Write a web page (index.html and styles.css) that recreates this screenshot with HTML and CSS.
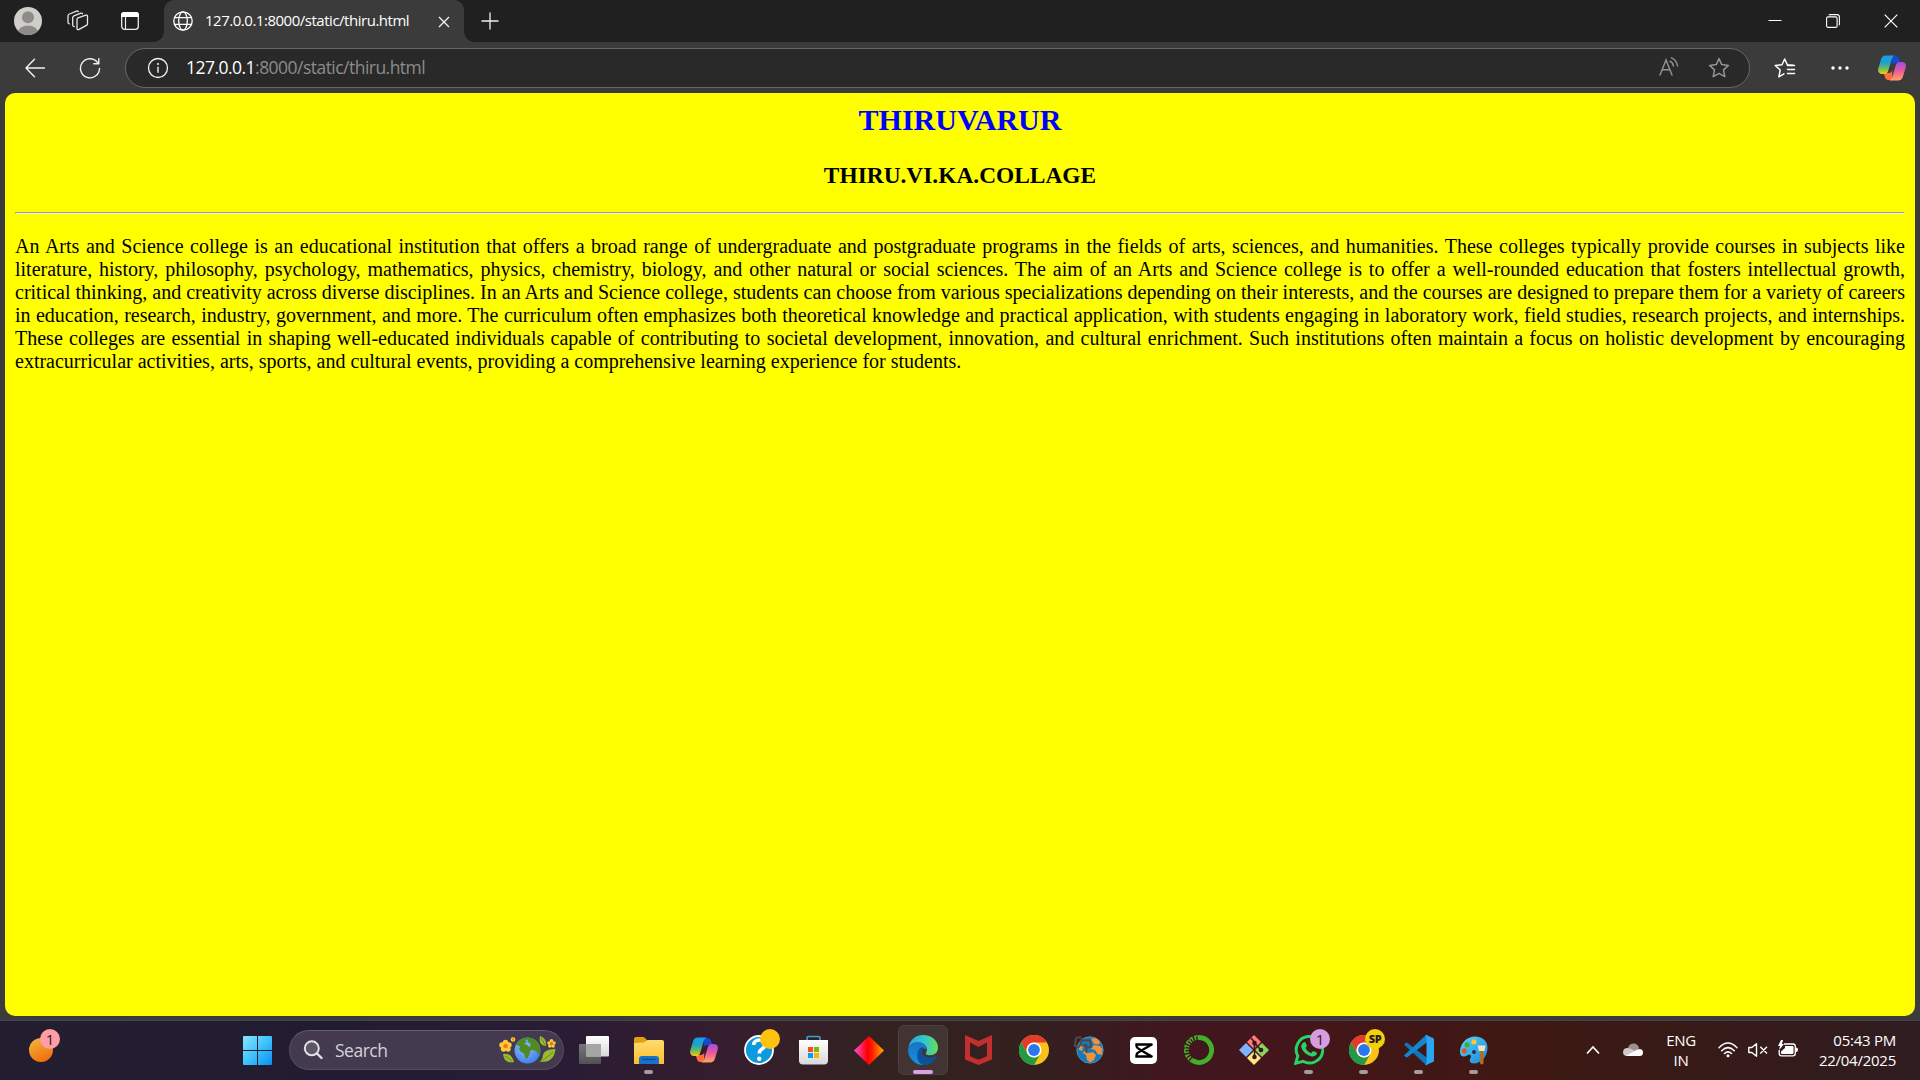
FILE: index.html
```html
<!DOCTYPE html>
<html lang="en">
<head>
<meta charset="utf-8">
<title>127.0.0.1:8000/static/thiru.html</title>
<link rel="stylesheet" href="styles.css">
</head>
<body>
<svg class="defs" width="0" height="0">
  <defs>
    <linearGradient id="cpA" x1="0" y1="0" x2="0" y2="1"><stop offset="0" stop-color="#1b9bf0"/><stop offset=".4" stop-color="#1ba5c8"/><stop offset=".7" stop-color="#6cba5a"/><stop offset="1" stop-color="#f5cc10"/></linearGradient>
    <linearGradient id="cpB" x1="0" y1="0" x2="0" y2="1"><stop offset="0" stop-color="#a04be8"/><stop offset=".5" stop-color="#ee5a9a"/><stop offset="1" stop-color="#ffa560"/></linearGradient>
    <linearGradient id="win" x1="0" y1="0" x2="1" y2="1"><stop offset="0" stop-color="#8ce2ff"/><stop offset=".5" stop-color="#3fc3fb"/><stop offset="1" stop-color="#0a8ff5"/></linearGradient>
    <linearGradient id="sun" x1=".2" y1="0" x2=".7" y2="1"><stop offset="0" stop-color="#f0b43c"/><stop offset="1" stop-color="#f26a0a"/></linearGradient>
    <linearGradient id="gem"><stop offset="0" stop-color="#ff4fd8"/><stop offset=".45" stop-color="#ff0000"/><stop offset=".6" stop-color="#ff1a00"/><stop offset="1" stop-color="#ffb000"/></linearGradient>
    <linearGradient id="edgeTop"><stop offset="0" stop-color="#2aa5dd"/><stop offset=".5" stop-color="#30c3d0"/><stop offset="1" stop-color="#66df58"/></linearGradient>
    <linearGradient id="edgeBlue" x1="0" y1="0" x2="0" y2="1"><stop offset="0" stop-color="#1573c4"/><stop offset="1" stop-color="#1a8fe0"/></linearGradient>
    <linearGradient id="folder" x1="0" y1="0" x2="0" y2="1"><stop offset="0" stop-color="#ffdc6e"/><stop offset="1" stop-color="#fdbf2d"/></linearGradient>
    <linearGradient id="paint" x1="0" y1="0" x2="1" y2="1"><stop offset="0" stop-color="#58d4fb"/><stop offset="1" stop-color="#1788d8"/></linearGradient>
    <linearGradient id="paper" x1="0" y1="0" x2="0" y2="1"><stop offset="0" stop-color="#ffffff"/><stop offset="1" stop-color="#d8d8dc"/></linearGradient>
    <linearGradient id="grey" x1="0" y1="0" x2="0" y2="1"><stop offset="0" stop-color="#777"/><stop offset="1" stop-color="#515151"/></linearGradient>
    <radialGradient id="earth" cx=".4" cy=".35" r=".7"><stop offset="0" stop-color="#8fc0ff"/><stop offset="1" stop-color="#3f7de8"/></radialGradient>
    <symbol id="copilot" viewBox="0 0 28 26">
      <path d="M14 1h3.500c2 0 3 1 3.500 2.800l1.300 4.200h-5c-2 0-3 1-3.600 3z" fill="#1648d0"/>
      <path d="M14 25h-3.500c-2 0-3-1-3.500-2.800L5.700 18h5c2 0 3-1 3.600-3z" fill="#ff6d3c"/>
      <path d="M8 .5h9c-1.800.5-2.800 2-3.400 4l-3.300 11c-.6 2-1.700 3.500-4 3.500H4c-3 0-4.500-2.500-3.700-5.500L3 4.500C3.700 2 5.500.5 8 .5z" fill="url(#cpA)"/>
      <path d="M20 25.500h-9c1.800-.5 2.800-2 3.400-4l3.300-11c.6-2 1.700-3.500 4-3.500H24c3 0 4.500 2.500 3.700 5.500l-2.700 9c-.7 2.500-2.500 4-5 4z" fill="url(#cpB)"/>
    </symbol>
    <symbol id="chrome" viewBox="0 0 30 30">
      <circle cx="15" cy="15" r="15" fill="#fbc116"/>
      <path d="M2 7.500A15 15 0 0 1 28 7.500H15a7.500 7.500 0 0 0-6.500 11.250z" fill="#e33b2e"/>
      <path d="M2 7.500A15 15 0 0 0 15 30l6.500-11.250a7.500 7.500 0 0 1-13 0z" fill="#219a48"/>
      <circle cx="15" cy="15" r="7.500" fill="#fff"/><circle cx="15" cy="15" r="5.900" fill="#2a76ee"/>
    </symbol>
  </defs>
</svg>

<header class="tabstrip">
  <div class="slot slot-avatar">
    <svg width="28" height="28" viewBox="0 0 28 28"><clipPath id="av"><circle cx="14" cy="14" r="14"/></clipPath><g clip-path="url(#av)"><path d="M0 0h28v28H0z" fill="#d0cecb"/><circle cx="14" cy="10.300" r="6" fill="#8f8b88"/><ellipse cx="14" cy="25.500" rx="10" ry="7" fill="#8f8b88"/></g></svg>
  </div>
  <div class="slot slot-spaces">
    <svg width="22" height="22" viewBox="0 0 22 22" fill="none" stroke="#e8e8e8" stroke-width="1.300" stroke-linejoin="round" stroke-linecap="round"><path d="M10 9.500q0-1.200 1.100-1.600l7.800-2.700q1.600-.4 1.600 1.100v7.500q0 1.200-1.100 1.600l-7.800 4.200q-1.600.5-1.600-1.100z"/><path d="M15.500 3.800q-.4-1-1.600-.6L7 5.900q-1.300.5-1.300 1.800v7.200q0 1.500 1.600 1.700"/><path d="M11.300 1.600q-.6-.9-1.700-.5L2.400 4Q1 4.500 1 5.800v6.500q0 1.400 1.300 1.600"/></svg>
  </div>
  <div class="slot slot-actions">
    <svg width="18" height="18" viewBox="0 0 18 18"><rect x=".7" y=".7" width="16.600" height="16.600" rx="2.800" fill="none" stroke="#ececec" stroke-width="1.300"/><path d="M0 5V3a3 3 0 0 1 3-3h12a3 3 0 0 1 3 3v2z" fill="#fff"/><path d="M4.500 5v12" stroke="#ececec" stroke-width="1.200"/></svg>
  </div>
  <div class="tab">
    <svg width="20" height="20" viewBox="0 0 20 20" fill="none" stroke="#fff" stroke-width="1.300"><circle cx="10" cy="10" r="9.200"/><ellipse cx="10" cy="10" rx="4.300" ry="9.200"/><path d="M1.500 6.700h17M1.500 13.300h17"/></svg>
    <span class="tab-title">127.0.0.1:8000/static/thiru.html</span>
    <svg class="tab-close" width="12" height="12" viewBox="0 0 12 12"><path d="M1 1l10 10M11 1L1 11" stroke="#eee" stroke-width="1.400"/></svg>
  </div>
  <div class="slot slot-new"><svg width="18" height="18" viewBox="0 0 18 18"><path d="M9 .5v17M.5 9h17" stroke="#f0f0f0" stroke-width="1.300"/></svg></div>
  <div class="window-controls">
    <div class="slot slot-win"><svg width="14" height="14" viewBox="0 0 14 14"><path d="M.5 6.500h13" stroke="#fff"/></svg></div>
    <div class="slot slot-win"><svg width="14" height="14" viewBox="0 0 14 14" fill="none" stroke="#fff" stroke-width="1.100"><rect x=".6" y="2.900" width="10.500" height="10.500" rx="1.500"/><path d="M2.800 1.200q.4-.6 1.200-.6h7q2.400 0 2.400 2.400v7q0 .8-.6 1.200"/></svg></div>
    <div class="slot slot-win"><svg width="14" height="14" viewBox="0 0 14 14"><path d="M.7.7l12.600 12.600M13.300.7L.7 13.300" stroke="#fff" stroke-width="1.200"/></svg></div>
  </div>
</header>

<nav class="toolbar">
  <div class="slot slot-back"><svg width="20" height="20" viewBox="0 0 20 20" fill="none" stroke="#f2f2f2" stroke-width="1.400" stroke-linecap="round" stroke-linejoin="round"><path d="M9.500 1.300L1 10l8.500 8.700M1 10h18.500"/></svg></div>
  <div class="slot slot-reload"><svg width="22" height="22" viewBox="0 0 22 22" fill="none" stroke="#f2f2f2" stroke-width="1.400" stroke-linecap="round" stroke-linejoin="round"><path d="M20.500 11.500a9.500 9.500 0 1 1-2.200-6.300l1.400 1.500M19.800 1.700v5h-5"/></svg></div>
  <div class="address">
    <svg width="22" height="22" viewBox="0 0 22 22"><circle cx="11" cy="11" r="9.500" fill="none" stroke="#f4f4f4" stroke-width="1.300"/><path d="M11 9.800v6" stroke="#f4f4f4" stroke-width="1.400"/><circle cx="11" cy="7" r="1" fill="#f4f4f4"/></svg>
    <span class="url"><span class="host">127.0.0.1</span>:8000/static/thiru.html</span>
    <svg class="read-aloud" width="20" height="20" viewBox="0 0 20 20" fill="none" stroke="#949494" stroke-width="1.400" stroke-linecap="round"><path d="M1 18L7 3l6 15M3.200 12.800h7.600"/><path d="M11 4.200q3 1.400 3.400 4.800M12.500.8q5.300 2.400 6 8.200"/></svg>
    <svg width="22" height="22" viewBox="0 0 22 22" fill="none" stroke="#949494" stroke-width="1.500" stroke-linejoin="round"><path d="M11 1.600l2.700 6 6.700.8-4.900 4.500 1.300 6.700-5.800-3.300-5.800 3.300 1.300-6.700-4.900-4.500 6.700-.8z"/></svg>
  </div>
  <div class="slot slot-fav"><svg width="22" height="20" viewBox="0 0 22 20" fill="none" stroke="#fff" stroke-width="1.500" stroke-linejoin="round" stroke-linecap="round"><path d="M19.500 7.300l-6.200-.5L10.700 1 8 6.800l-6.800.7 5 4.500-1.300 6.800 5-2.900M13.500 7.500h7M13.500 11.500h7M13.500 15.500h7"/></svg></div>
  <div class="slot slot-more"><svg width="18" height="4" viewBox="0 0 18 4" fill="#fff"><circle cx="2" cy="2" r="1.700"/><circle cx="9" cy="2" r="1.700"/><circle cx="16" cy="2" r="1.700"/></svg></div>
  <div class="slot slot-copilot"><svg width="28" height="26"><use href="#copilot"/></svg></div>
</nav>

<main class="viewport">
  <h2 class="place">THIRUVARUR</h2>
  <h3 class="college">THIRU.VI.KA.COLLAGE</h3>
  <hr class="rule">
  <p class="about">An Arts and Science college is an educational institution that offers a broad range of undergraduate and postgraduate programs in the fields of arts, sciences, and humanities. These colleges typically provide courses in subjects like literature, history, philosophy, psychology, mathematics, physics, chemistry, biology, and other natural or social sciences. The aim of an Arts and Science college is to offer a well-rounded education that fosters intellectual growth, critical thinking, and creativity across diverse disciplines. In an Arts and Science college, students can choose from various specializations depending on their interests, and the courses are designed to prepare them for a variety of careers in education, research, industry, government, and more. The curriculum often emphasizes both theoretical knowledge and practical application, with students engaging in laboratory work, field studies, research projects, and internships. These colleges are essential in shaping well-educated individuals capable of contributing to societal development, innovation, and cultural enrichment. Such institutions often maintain a focus on holistic development by encouraging extracurricular activities, arts, sports, and cultural events, providing a comprehensive learning experience for students.</p>
</main>

<footer class="taskbar">
  <div class="widgets">
    <svg width="24" height="24"><circle cx="12" cy="12" r="12" fill="url(#sun)"/></svg>
    <span class="badge badge-pink">1</span>
  </div>
  <div class="apps">
    <div class="app"><svg width="29" height="29" viewBox="0 0 29 29" fill="url(#win)"><path d="M1 0h13v14H0V1q0-1 1-1zM15 0h13q1 0 1 1v13H15zM0 15h14v14H1q-1 0-1-1zM15 15h14v13q0 1-1 1H15z"/></svg></div>
    <div class="search">
      <svg width="20" height="20" viewBox="0 0 20 20" fill="none" stroke="#e4e2e8" stroke-linecap="round"><circle cx="8.800" cy="8.300" r="7" stroke-width="2" fill="#5d5568"/><path d="M14 13.500l4.500 4.500" stroke-width="2.400"/></svg>
      <span class="search-label">Search</span>
      <svg class="doodle" width="57" height="30" viewBox="0 0 57 30">
        <g fill="#ffc73a"><circle cx="6.500" cy="7.500" r="2.700"/><circle cx="10" cy="10" r="2.700"/><circle cx="9" cy="14" r="2.700"/><circle cx="4.500" cy="14" r="2.700"/><circle cx="3" cy="10" r="2.700"/><circle cx="14" cy="4.500" r="2.300"/><circle cx="52.500" cy="5.800" r="1.800"/><circle cx="55" cy="8" r="1.800"/><circle cx="54" cy="11" r="1.800"/><circle cx="50.800" cy="11" r="1.800"/><circle cx="50" cy="8" r="1.800"/></g>
        <circle cx="6.600" cy="11" r="2.300" fill="#f07818"/><circle cx="14" cy="4.500" r="1" fill="#f07818"/><circle cx="52.500" cy="8.700" r="1.500" fill="#f07818"/>
        <path d="M4 19q8-2 11 8-10 2-11-8zM41 1q7 2 6 10-8 0-6-10zM56.500 14q-13 0-13 9l-2.500 4q14 1 15.500-13z" fill="#9bbb2e"/>
        <path d="M6 21l7 5M42 3l4 7M54 17L42 27" stroke="#56801c" stroke-width=".8"/>
        <circle cx="28.500" cy="15.500" r="13" fill="url(#earth)"/>
        <path d="M17 9.500q3-6 10-6.800l2 1-3 2 2 1-3 2.300 3 .5 1 1.500 3 1.500 1 2-2 2-.5 3-2 3.500-2 .5-1.500-5-3-1.500-2-3 1-2.500zM28 2.600q9 0 12.500 7l.7 7-1.700 3-2.500-3.600-3.500-1-2.500-3.500 1-2.500-3-2z" fill="#4f8a22"/>
      </svg>
    </div>
    <div class="app"><svg width="30" height="28" viewBox="0 0 30 28"><rect x="0" y="8" width="22" height="20" rx="1" fill="url(#grey)"/><rect x="7" y="0" width="23" height="20.500" rx="1" fill="url(#paper)"/><path d="M7 8h15v12.500H7z" fill="#a5a5a5"/></svg></div>
    <div class="app running"><svg width="30" height="27" viewBox="0 0 30 27"><path d="M0 2q0-2 2-2h7q1 0 2 1l2 2h-1v5H0z" fill="#e0a010"/><path d="M0 6l10-.5L13 3h15q2 0 2 2v22H0z" fill="url(#folder)"/><path d="M5 27v-5q0-3 3-3h14q3 0 3 3v5z" fill="#1673c8"/><path d="M8.500 22.500h13" stroke="#0a4d8e" stroke-width="1.300"/></svg></div>
    <div class="app"><svg width="28" height="26"><use href="#copilot"/></svg></div>
    <div class="app help"><svg width="30" height="30" viewBox="0 0 30 30"><circle cx="15" cy="15" r="14" fill="#0c9bdc" stroke="#fff" stroke-width="1.800"/><path d="M9.500 10q.7-5 6-5 5.500 0 5.500 4.500 0 2.500-3 4.500-2.700 1.700-2.700 4.500" fill="none" stroke="#fff" stroke-width="3.600"/><circle cx="15.200" cy="23.800" r="2.200" fill="#fff"/></svg><span class="badge badge-amber"></span></div>
    <div class="app"><svg width="29" height="30" viewBox="0 0 29 30"><path d="M8 6V3q0-1.500 1.500-1.500h10Q21 1.500 21 3v3" fill="none" stroke="#2aa9dc" stroke-width="1.600"/><path d="M0 5h29v20.500q0 4-4 4H4q-4 0-4-4z" fill="url(#paper)"/><path d="M9 12h5v5H9z" fill="#f04e23"/><path d="M15 12h5v5h-5z" fill="#7eb900"/><path d="M9 18h5v5H9z" fill="#00a1ee"/><path d="M15 18h5v5h-5z" fill="#fdb400"/></svg></div>
    <div class="app"><svg width="30" height="29" viewBox="0 0 30 29"><path d="M15 0l15 14.500L15 29 0 14.500z" fill="url(#gem)"/></svg></div>
    <div class="app active"><svg width="30" height="30" viewBox="0 0 30 30"><path d="M.5 12C2 4.500 8 0 15 0c9 0 15 6 15 12.500 0 5-3.500 7.700-8 7.700-3.500 0-4.800-1.500-3.900-2.800 2.700-4-.7-8.500-6.100-8.500C6 8.900 2 10 .5 12z" fill="url(#edgeTop)"/><path d="M0 15C0 10 4.500 7 9.500 7c5.500 0 9.500 3.500 9.500 7.500-6-4-11 5-4.500 10.500 2.500 2.200 5 3 6.500 3.700A15 15 0 0 1 0 15z" fill="url(#edgeBlue)"/><path d="M10.500 15q2-3.500 5.500-2.600-4 3.600-.3 8 5 4.600 12.300.6 1 0 .4 1.200C25 28 20 30.500 15 30 8 27 8.500 19 10.500 15z" fill="#0d509b"/></svg></div>
    <div class="app"><svg width="27" height="30" viewBox="0 0 27 30"><path d="M0 0l13.500 6L27 0v24.500L13.500 30 0 24.500zM5 7.500v13.700l8.500 3.600 8.500-3.600V7.500L13.500 12z" fill="#c22f2e" fill-rule="evenodd"/></svg></div>
    <div class="app"><svg width="30" height="30"><use href="#chrome"/></svg></div>
    <div class="app"><svg width="30" height="30" viewBox="0 0 30 30"><circle cx="16" cy="15" r="13.200" fill="#1b78b8" stroke="#4e9fc8" stroke-width=".8"/><path d="M17 3.500l5-.3 4 3.300-1 3-5-.5zM20 10l6 1 2.500 3-1 6-4-1-2.500-4-4-1zM10 16l5 2 4-1 3 3-2 5-4 2.500-3-2.500-1-5-3-2zM5 10l4 2-1 4-3-1z" fill="#f0913c"/><path d="M2 3l5-1M2 3L.8 11l5 1M8 3L6 11M7 5l9 .5 1 6-3 1-5-3M12 9l.5 9" stroke="#4c4a48" stroke-width="2" fill="none"/></svg></div>
    <div class="app"><svg width="27" height="27" viewBox="0 0 27 27"><rect width="27" height="27" rx="5" fill="#fff"/><path d="M22.500 7L9 15q-2.500 1.300-2.500 3v1.500h13V17M22.500 20L9 12Q6.500 10.700 6.500 9V7.500h13V10" fill="none" stroke="#000" stroke-width="2.400"/></svg></div>
    <div class="app"><svg width="30" height="30" viewBox="0 0 30 30" fill="none" stroke="#43b02a"><path d="M15 2.500a12.500 12.500 0 1 1-7 22.800" stroke-width="4.800"/><path d="M15 2.500A12.500 12.500 0 0 0 8 25.300" stroke-width="4.500" stroke-dasharray="1.500 1.500"/><path d="M13 1A14 14 0 0 0 5 25" stroke-width="1.500" stroke-dasharray="3 2"/></svg></div>
    <div class="app"><svg width="30" height="30" viewBox="0 0 30 30"><path d="M15 0l7 7-7 7-7-7z" fill="#ff7b7b"/><path d="M23 8l7 7-7 7-7-7z" fill="#8ad160"/><path d="M7 8l7 7-7 7-7-7z" fill="#80b3ff"/><path d="M15 16l7 7-7 7-7-7z" fill="#ffe680"/><path d="M12 3l3.500 4v15M15.500 8l6.500 7" stroke="#3c1515" stroke-width="1.600" fill="none"/><g fill="#3c1515"><circle cx="15.500" cy="8" r="2.300"/><circle cx="22" cy="15" r="2.300"/><circle cx="15.500" cy="22" r="2.300"/></g></svg></div>
    <div class="app running"><svg width="30" height="30" viewBox="0 0 30 30"><path d="M1.800 28.200l2-7.200A13.300 13.300 0 1 1 9 26.300z" fill="none" stroke="#25d366" stroke-width="3"/><path d="M9.500 7.500q1.500-1 2.300.5l1 2.700q.2.800-1.300 2.300 1.500 3.500 5.500 5.300l1.800-2q.8-.6 3.900 1.200.5.700-.3 2.300-2 2.500-5.400 1.500-7-2-9.700-8.800-.6-3 2.200-5z" fill="#25d366"/></svg><span class="badge badge-lilac">1</span></div>
    <div class="app running"><svg width="30" height="30"><use href="#chrome"/></svg><span class="badge badge-sp">SP</span></div>
    <div class="app running"><svg width="30" height="30" viewBox="0 0 30 30"><path d="M0 9.500l2-1.700q.8-.5 1.600.1L24 23.500v6L22 30z" fill="#0f75bc"/><path d="M0 20.500l2 1.700q.8.500 1.600-.1L24 6.500v-6L22 0z" fill="#1287d0"/><path d="M22 0l7 3q1 .5 1 1.600v20.800q0 1.100-1 1.600l-7 3-.8-.3Q22.500 29 22.500 27V3q0-2-1.300-2.700z" fill="#2aa7f4"/></svg></div>
    <div class="app running"><svg width="30" height="30" viewBox="0 0 30 30"><path d="M16 1.500c8 0 13 5 12.500 12C28 22 22 28.500 15 28.500c-4.500 0-5-3-3.500-5.500s-.5-4-3-2.700C5 22.500 1 22 1 17 1 8 8 1.500 16 1.500z" fill="url(#paint)"/><circle cx="5.300" cy="15.800" r="2.600" fill="#e4552c"/><circle cx="8" cy="9.800" r="2.600" fill="#3fae2a"/><circle cx="15" cy="6.800" r="2.600" fill="#ffc52b"/><circle cx="15" cy="17" r="2" fill="#26314c"/><path d="M18.500 10.500h8l-1 5.500h-5.500z" fill="#f4e1c2"/><path d="M21 16h3.500v12q-1.700 3-3.500 0z" fill="#b96c1f"/></svg></div>
  </div>
  <div class="tray">
    <svg class="chevron" width="14" height="10" viewBox="0 0 14 10"><path d="M1 8.500l6-6.500 6 6.500" fill="none" stroke="#fff" stroke-width="1.700"/></svg>
    <svg class="cloud" width="20" height="14" viewBox="0 0 20 14"><path d="M5 5q1-4.500 5.500-4.500Q15 .5 16 5l-3 5H4z" fill="#9d8f8e"/><path d="M0 9q.3-4 4.500-4 3 0 5 1.700L14 9v4H4Q0 13 0 9z" fill="#d0c8c7"/><path d="M3 13L12.500 7.500Q14.500 6 16.500 6q3.500.3 3.500 3.500 0 3.500-3.500 3.500z" fill="#fff"/></svg>
    <div class="lang"><span>ENG</span><span>IN</span></div>
    <svg class="wifi" width="20" height="16" viewBox="0 0 20 16" fill="none" stroke="#fff" stroke-width="1.500" stroke-linecap="round"><path d="M1 5.800q9-9.400 18 0M3.700 8.800q6.300-6.300 12.600 0M6.500 11.500q3.500-3.300 7 0"/><circle cx="10" cy="13.700" r="1.500" fill="#fff" stroke="none"/></svg>
    <svg class="mute" width="20" height="14" viewBox="0 0 20 14" fill="none" stroke="#fff" stroke-width="1.400" stroke-linejoin="round"><path d="M.8 4.500h3L8.500.8v12.400L3.800 9.500h-3zM12.300 3.700l6.700 6.700M19 3.700l-6.700 6.700"/></svg>
    <svg class="battery" width="20" height="17" viewBox="0 0 20 17"><path d="M6 4h9q2.300 0 2.300 2.300v7.200q0 2.300-2.300 2.300H3.500q-2.300 0-2.300-2.300V10" fill="none" stroke="#fff" stroke-width="1.300"/><path d="M7 6h7.500q1 0 1 1v6q0 1-1 1H4q-1 0-1-1v-1.500L7 8zM18 7.500q2 0 2 2.300t-2 2.200z" fill="#fff"/><path d="M3 0L0 6h2l-1 4 5-6H4L5 0z" fill="#fff"/></svg>
    <div class="clock"><span>05:43 PM</span><span>22/04/2025</span></div>
  </div>
</footer>
</body>
</html>
```
FILE: styles.css
```css
* { box-sizing: border-box; }

body {
  margin: 0;
  width: 1920px;
  height: 1080px;
  overflow: hidden;
  display: flex;
  flex-direction: column;
  background: #3b3b3b;
  font-family: "Open Sans", "Noto Sans", sans-serif;
}

svg { display: block; flex: none; }
.defs { position: absolute; }

.slot {
  display: flex;
  align-items: center;
  justify-content: center;
  flex: none;
}

/* Tab strip */
.tabstrip {
  display: flex;
  height: 42px;
  background: #202020;
  flex: none;
}
.slot-avatar { width: 56px; }
.slot-spaces { width: 44px; }
.slot-actions { width: 60px; }
.tab {
  position: relative;
  display: flex;
  align-items: center;
  width: 300px;
  margin-left: 4px;
  padding: 0 14px 0 9px;
  background: #3b3b3b;
  border-radius: 10px 10px 0 0;
}
.tab::before,
.tab::after {
  content: "";
  position: absolute;
  bottom: 0;
  width: 10px;
  height: 10px;
}
.tab::before {
  left: -10px;
  background: radial-gradient(circle at 0 0, transparent 9.5px, #3b3b3b 10px);
}
.tab::after {
  right: -10px;
  background: radial-gradient(circle at 100% 0, transparent 9.5px, #3b3b3b 10px);
}
.tab-title {
  margin: 0 0 2px 12px;
  font-size: 15px;
  line-height: 20px;
  letter-spacing: -0.48px;
  color: #fff;
  white-space: nowrap;
}
.tab-close { margin: 1px 0 0 auto; }
.slot-new { width: 52px; }
.window-controls { display: flex; margin-left: auto; }
.slot-win { width: 58px; }

/* Toolbar */
.toolbar {
  display: flex;
  align-items: center;
  height: 51px;
  padding-left: 7px;
  flex: none;
}
.slot-back { width: 56px; }
.slot-reload { width: 54px; }
.address {
  display: flex;
  align-items: center;
  width: 1625px;
  height: 40px;
  margin-left: 8px;
  padding: 0 19px 0 21px;
  border: 1px solid #686868;
  border-radius: 20px;
  background: #292929;
}
.url {
  margin: 0 0 2px 17px;
  font-size: 17.5px;
  line-height: 24px;
  letter-spacing: -0.53px;
  color: #8c8c8c;
  white-space: nowrap;
}
.host { color: #fff; }
.read-aloud { margin: 0 29px 2px auto; }
.slot-fav { width: 56px; margin-left: 7px; }
.slot-more { width: 53px; }
.slot-copilot { width: 52px; }

/* Page */
.viewport {
  height: 923px;
  margin: 0 5px;
  padding: 10px;
  border-radius: 10px;
  background: #ff0;
  font-family: "Liberation Serif", "Times New Roman", serif;
  font-size: 20px;
  color: #000;
  flex: none;
}
.place {
  margin: 0 0 25px;
  font-size: 30px;
  line-height: 34px;
  text-align: center;
  color: #00f;
}
.college {
  margin: 0 0 23px;
  font-size: 23.4px;
  line-height: 27px;
  text-align: center;
}
.rule {
  margin: 0;
  border: 1px solid #9a9a9a;
  border-right-color: #eee;
  border-bottom-color: #eee;
}
.about {
  margin: 21px 0 0;
  line-height: 23px;
  text-align: justify;
}

/* Taskbar */
.taskbar {
  display: flex;
  align-items: center;
  height: 60px;
  margin-top: auto;
  padding-bottom: 1px;
  border-top: 1px solid #46414a;
  background: linear-gradient(90deg, #231e2f 0, #221c32 350px, #2a1c34 570px, #361d2e 720px, #33221f 890px, #341f1f 1040px, #42161f 1190px, #431618 1340px, #3e1812 1530px, #371a17 1680px, #2f1c20 1920px);
  flex: none;
}
.widgets {
  position: relative;
  width: 230px;
  padding-left: 29px;
}
.badge {
  position: absolute;
  width: 20px;
  height: 20px;
  border-radius: 50%;
  font-size: 15px;
  line-height: 20px;
  text-align: center;
  color: #2b1a22;
}
.badge-pink { left: 40px; top: -9px; background: #ff9ca5; }
.badge-amber { right: 6px; top: 8px; background: #ffc20e; }
.badge-lilac { right: 6px; top: 8px; background: #d79be0; }
.badge-sp {
  right: 6px;
  top: 8px;
  background: #f2d00c;
  font-size: 11px;
  font-weight: 800;
  letter-spacing: -0.5px;
}
.apps { display: flex; align-items: center; }
.app {
  position: relative;
  display: flex;
  align-items: center;
  justify-content: center;
  width: 55px;
  height: 58px;
}
.running::after,
.active::after {
  content: "";
  position: absolute;
  left: 23px;
  bottom: 5px;
  width: 9px;
  height: 4px;
  border-radius: 2px;
  background: #a69a9c;
}
.active {
  width: 50px;
  height: 50px;
  margin: 0 3px 0 2px;
  border: 1px solid #4c403f;
  border-radius: 6px;
  background: #413432;
}
.active::after { left: 14px; bottom: 0; width: 20px; background: #dda0e6; }
.search {
  display: flex;
  align-items: center;
  width: 275px;
  height: 40px;
  margin: 0 2px 0 4px;
  padding: 0 7px 0 13px;
  border: 1px solid #564c60;
  border-top-color: #665c6f;
  border-radius: 20px;
  background: #433a50;
}
.search-label {
  margin-left: 12px;
  font-size: 17.5px;
  line-height: 24px;
  letter-spacing: -0.5px;
  color: #d5d2d9;
}
.doodle { margin-left: auto; }
.tray {
  display: flex;
  align-items: center;
  margin-left: auto;
  padding-right: 24px;
  font-size: 15px;
  line-height: 20px;
  color: #fff;
}
.lang,
.clock { display: flex; flex-direction: column; }
.lang { align-items: center; width: 40px; margin: 0 17px 0 18px; letter-spacing: -0.3px; }
.clock { align-items: flex-end; width: 78px; margin-left: 20px; margin-top: -1px; letter-spacing: -0.25px; white-space: nowrap; }
.cloud { margin-left: 23px; }
.mute { margin-left: 10px; }
.battery { margin: -4px 0 0 10px; }
```
